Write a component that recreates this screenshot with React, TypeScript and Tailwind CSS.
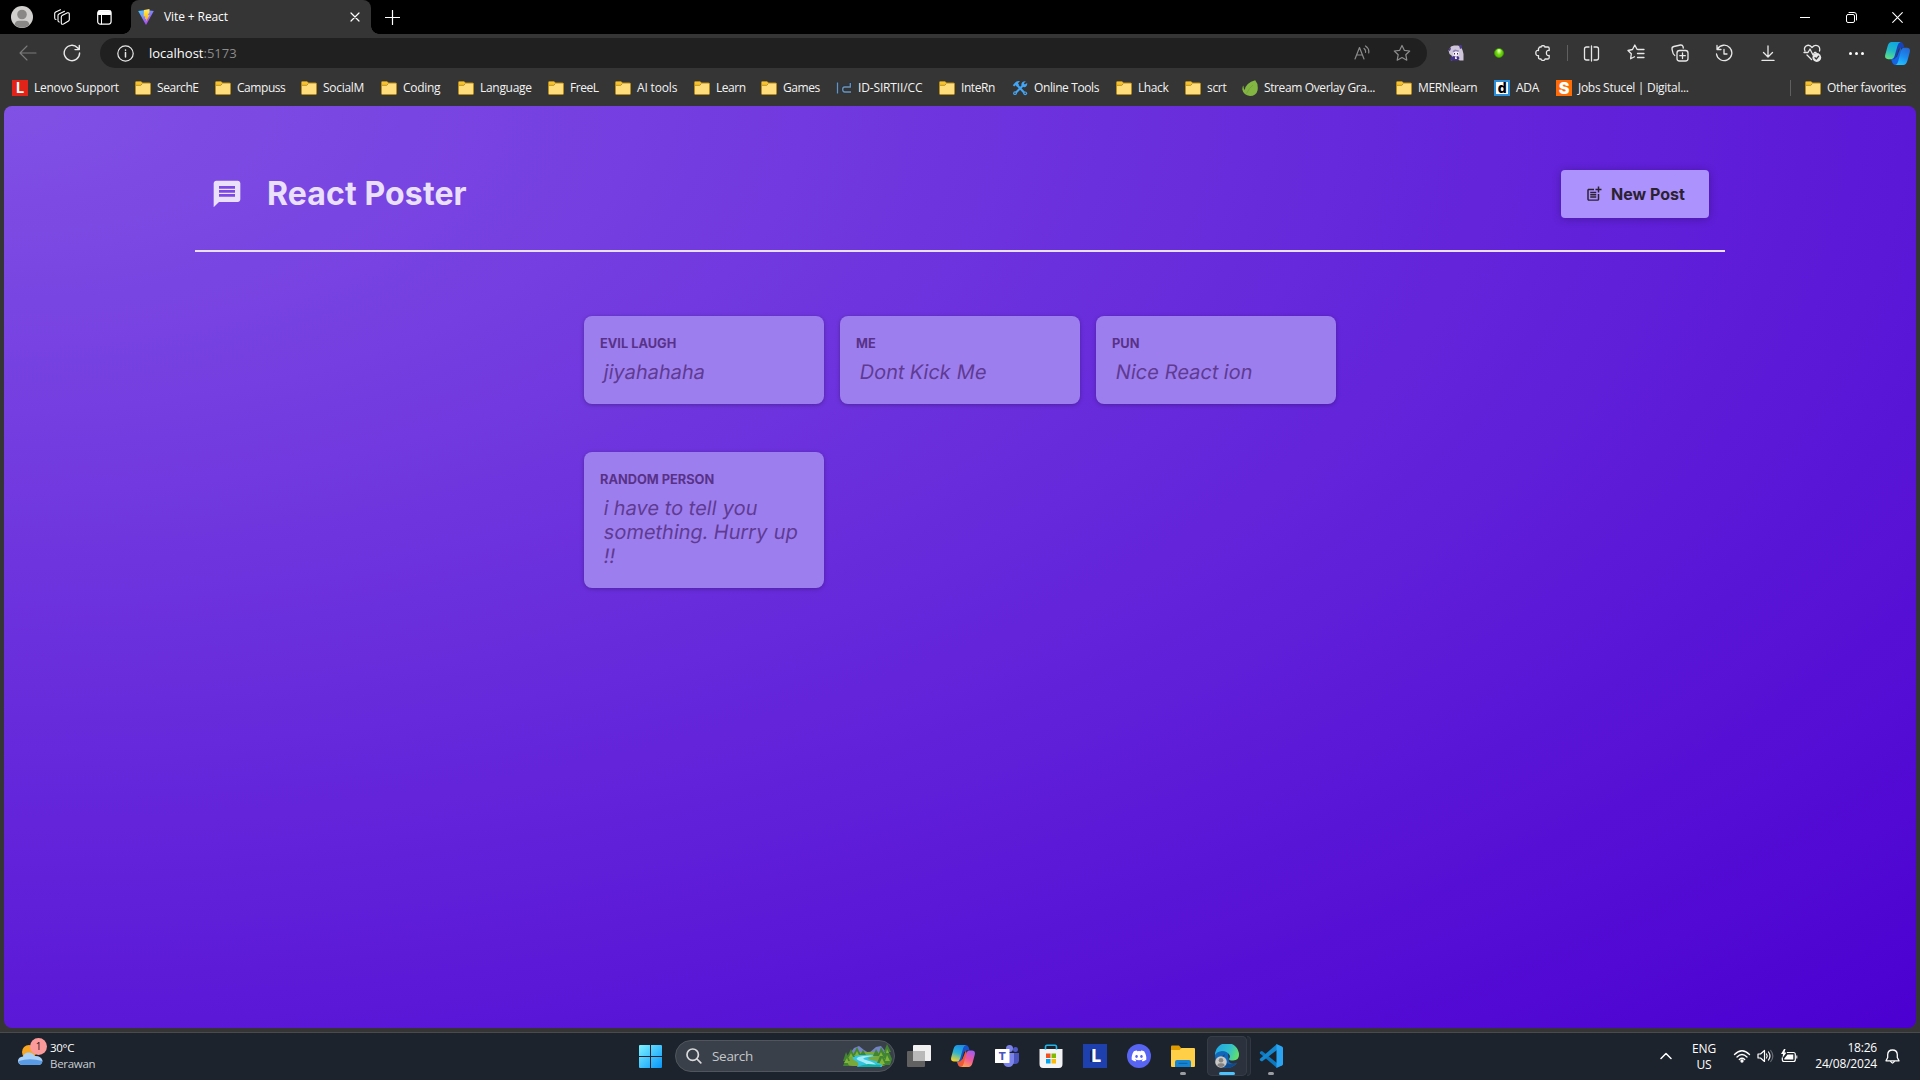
import React from "react";
import { MdMessage, MdPostAdd } from "react-icons/md";
import { FaDiscord } from "react-icons/fa";

type IconProps = { className?: string; children: React.ReactNode; size?: number; w?: number };

function Line({ className = "", children, size = 16, w = 1 }: IconProps) {
  return (
    <svg
      className={`shrink-0 ${className}`}
      width={size}
      height={size}
      viewBox={`0 0 ${size} ${size}`}
      fill="none"
      stroke="currentColor"
      strokeWidth={w}
      strokeLinecap="round"
      strokeLinejoin="round"
    >
      {children}
    </svg>
  );
}

function Folder() {
  return (
    <svg width="16" height="16" viewBox="0 0 16 16" className="shrink-0">
      <path d="M.5 2.5Q.5 1.5 1.5 1.5H6L7.5 3H14.5Q15.5 3 15.5 4V13.5Q15.5 14.5 14.5 14.5H1.5Q.5 14.5 .5 13.5Z" fill="#ffdc7c" stroke="#b88a16" />
      <path d="M1 5V2.5Q1 2 1.5 2H5.8L7.2 3.4L5.7 5Z" fill="#f6c22e" />
      <path d="M1 5.3H5.8L7.4 3.5" fill="none" stroke="#b88a16" strokeWidth=".9" />
    </svg>
  );
}

function SirtiiMark() {
  return (
    <svg width="16" height="16" viewBox="0 0 16 16" className="shrink-0" fill="none">
      <path d="M1.5 2V14M14.6 2V6.7H8.5Q6.5 6.7 6.5 9Q6.5 12 8.5 12H15" stroke="#20354a" strokeWidth="3" />
      <path d="M1.5 2.5V13.5M14.3 3V7H8.5Q6.7 7 6.7 9.3Q6.7 12 8.7 12H15" stroke="#7391ad" strokeWidth="1.3" />
    </svg>
  );
}

function ToolsMark() {
  return (
    <svg width="16" height="16" viewBox="0 0 16 16" className="shrink-0" fill="none">
      <path d="M5.5 5.5L13 13.5M10.5 6L3 13.5" stroke="#42a5f5" strokeWidth="2.1" strokeLinecap="round" />
      <path d="M.8 5.3L3.2 2.5Q5 .5 8 1L6 3.2L7 4.8L5 6.8L3.6 5.2L2.2 6.6Z" fill="#42a5f5" />
      <path d="M13.8 1.2L11.8 3.2L12.8 4.6L15.2 3Q15.5 6.5 12.5 7.2L9.8 6.4L9.3 4.2Q10 .8 13.8 1.2Z" fill="#42a5f5" />
      <circle cx="3" cy="13.2" r="1.9" fill="#42a5f5" />
      <circle cx="13.2" cy="13.3" r="1.9" fill="#42a5f5" />
      <circle cx="3" cy="13.2" r=".7" fill="#353535" />
      <circle cx="13.2" cy="13.3" r=".7" fill="#353535" />
    </svg>
  );
}

function LeafMark() {
  return (
    <svg width="16" height="16" viewBox="0 0 16 16" className="shrink-0">
      <path d="M13.2 .3Q16.5 4 15.6 10.2Q14.2 16 8 16Q1.500 15.500 .3 9.600Q.300 6 1.500 5.500Q1.600 9.500 2.800 9.800Q3.800 3 13.200 .300Z" fill="#82b541" />
      <path d="M4.500 13.500Q7 8 11 5" stroke="#6f9f35" fill="none" strokeWidth=".7" />
    </svg>
  );
}

function LetterTile({ kind }: { kind: "lenovo" | "ada" | "jobs" }) {
  if (kind === "lenovo") {
    return (
      <span className="flex size-4 shrink-0 items-center justify-center bg-[#e2231a] font-['Inter'] text-[14.5px] leading-none font-bold text-white">
        L
      </span>
    );
  }
  if (kind === "ada") {
    return (
      <span className="flex size-4 shrink-0 items-center justify-center border-2 border-[#2b8fd9] bg-white font-['Inter'] text-[14px] leading-none font-extrabold text-black">
        d
      </span>
    );
  }
  return (
    <span className="flex size-4 shrink-0 items-center justify-center bg-[#ff6c05] font-['Inter'] text-[16px] leading-none font-black text-white">
      S
    </span>
  );
}

const bookmarks: { label: string; width: string; icon?: React.ReactNode; tracking?: string }[] = [
  { label: "Lenovo Support", width: "w-[123px]", icon: <LetterTile kind="lenovo" /> },
  { label: "SearchE", width: "w-[80px]", tracking: "tracking-[-0.45px]" },
  { label: "Campuss", width: "w-[86px]", tracking: "tracking-[-0.45px]" },
  { label: "SocialM", width: "w-[80px]" },
  { label: "Coding", width: "w-[77px]" },
  { label: "Language", width: "w-[90px]" },
  { label: "FreeL", width: "w-[67px]", tracking: "tracking-[-0.45px]" },
  { label: "AI tools", width: "w-[79px]", tracking: "tracking-[-0.15px]" },
  { label: "Learn", width: "w-[67px]", tracking: "tracking-[-0.45px]" },
  { label: "Games", width: "w-[75px]", tracking: "tracking-[-0.45px]" },
  { label: "ID-SIRTII/CC", width: "w-[103px]", icon: <SirtiiMark />, tracking: "tracking-[-0.15px]" },
  { label: "InteRn", width: "w-[73px]", tracking: "tracking-[-0.45px]" },
  { label: "Online Tools", width: "w-[104px]", icon: <ToolsMark />, tracking: "tracking-[-0.4px]" },
  { label: "Lhack", width: "w-[69px]", tracking: "tracking-[-0.4px]" },
  { label: "scrt", width: "w-[57px]" },
  { label: "Stream Overlay Gra...", width: "w-[154px]", icon: <LeafMark />, tracking: "tracking-[-0.38px]" },
  { label: "MERNlearn", width: "w-[98px]", tracking: "tracking-[-0.38px]" },
  { label: "ADA", width: "w-[62px]", icon: <LetterTile kind="ada" /> },
  { label: "Jobs Stucel | Digital...", width: "w-[180px]", icon: <LetterTile kind="jobs" /> },
];

function TabStrip() {
  return (
    <div className="flex h-[34px] items-stretch bg-black text-white">
      <div className="flex w-[131px] items-center pl-[11px]">
        <svg width="22" height="22" viewBox="0 0 22 22">
          <circle cx="11" cy="11" r="11" fill="#d2d0ce" />
          <circle cx="11" cy="8.500" r="4.800" fill="#8a8886" />
          <path d="M3.500 19Q4 14.700 8 14.700H14Q18 14.700 18.500 19Q11 24.500 3.500 19Z" fill="#8a8886" />
        </svg>
        <Line className="ml-[21px]" size={16} w={1.1}>
          <path d="M8.500 6.300L13.500 3.800Q15.300 3.500 15.300 5V10.500Q15.300 11.500 14.500 12L9.500 15Q7.300 15.800 7.300 14V8Q7.300 7 8.500 6.300Z" />
          <path d="M5.300 13Q4 13 4 11.500V6.500Q4 5.500 5 5L10.500 2.200M2 10.500Q.7 10.500 .7 9V4.500Q.7 3.500 1.700 3L6.500 .7" />
        </Line>
        <Line className="ml-[27px]" size={15} w={1.2}>
          <rect x=".7" y=".7" width="13.400" height="13.400" rx="2.500" />
          <path d="M1.500 1.200H13.500V4.300H1.500Z" fill="currentColor" />
          <path d="M4.500 5V14" strokeWidth="1" />
        </Line>
      </div>
      <div className="relative flex w-[240px] items-center rounded-t-[8px] bg-[#353535] pl-[7px]">
        <span className="absolute bottom-0 -left-2 size-2 bg-[radial-gradient(circle_at_0_0,#000_7.5px,#353535_8px)]" />
        <span className="absolute -right-2 bottom-0 size-2 bg-[radial-gradient(circle_at_100%_0,#000_7.5px,#353535_8px)]" />
        <svg width="16" height="16" viewBox="0 0 16 16">
          <defs>
            <linearGradient id="vite-a" x1="0" y1="0" x2=".7" y2="1">
              <stop offset="0" stopColor="#41d1ff" />
              <stop offset="1" stopColor="#bd34fe" />
            </linearGradient>
            <linearGradient id="vite-b" x1="0" y1="0" x2="0" y2="1">
              <stop offset="0" stopColor="#ffea83" />
              <stop offset=".3" stopColor="#ffdd35" />
              <stop offset="1" stopColor="#ffa800" />
            </linearGradient>
          </defs>
          <path d="M.2 2.100L8 1L15.800 2.100L8.300 15.600Q8 16 7.700 15.600Z" fill="url(#vite-a)" />
          <path d="M11.500 0L6 1L5.600 7.600L7.300 7.300L6.900 10L8.300 9.700L7.700 13L11.700 6L9.700 6.300L11.400 3.300Z" fill="url(#vite-b)" />
        </svg>
        <span className="ml-[10px] grow text-[12px] tracking-[-0.1px]">Vite + React</span>
        <Line className="mr-[11px]" size={10} w={1.2}>
          <path d="M1 1L9 9M9 1L1 9" />
        </Line>
      </div>
      <div className="flex grow items-center pl-[14px]">
        <Line size={15} w={1.2}>
          <path d="M7.500 .5V14.500M.5 7.500H14.500" />
        </Line>
      </div>
      <div className="flex w-[138px] items-center">
        <span className="flex w-[46px] justify-center">
          <span className="h-px w-[10px] bg-white" />
        </span>
        <span className="flex w-[46px] justify-center">
          <Line size={11}>
            <rect x=".5" y="2.500" width="8" height="8" rx="1.500" />
            <path d="M3 .5H8Q10.500 .5 10.500 3V8" />
          </Line>
        </span>
        <span className="flex w-[46px] justify-center">
          <Line size={11} w={1.1}>
            <path d="M.7 .7L10.300 10.300M10.300 .7L.7 10.300" />
          </Line>
        </span>
      </div>
    </div>
  );
}

function Slot({ children, className = "w-[44px]" }: { children: React.ReactNode; className?: string }) {
  return <span className={`flex shrink-0 items-center justify-center ${className}`}>{children}</span>;
}

function CopilotMark({ size, warm }: { size: number; warm?: boolean }) {
  const id = warm ? "cw" : "cb";
  return (
    <svg width={size} height={size} viewBox="0 0 24 24">
      <defs>
        <linearGradient id={`${id}1`} x1=".6" y1="0" x2=".3" y2="1">
          <stop offset="0" stopColor={warm ? "#1a8fe8" : "#0fa5e0"} />
          <stop offset=".5" stopColor={warm ? "#2fb3d0" : "#21b8c8"} />
          <stop offset="1" stopColor={warm ? "#f3d32b" : "#5fe084"} />
        </linearGradient>
        <linearGradient id={`${id}2`} x1=".7" y1="0" x2=".3" y2="1">
          <stop offset="0" stopColor={warm ? "#a05cf0" : "#2668d8"} />
          <stop offset=".5" stopColor={warm ? "#f0589b" : "#1b8df0"} />
          <stop offset="1" stopColor={warm ? "#ffa04f" : "#22c3ff"} />
        </linearGradient>
      </defs>
      <path d="M6 1H15Q17 1 17.800 3.500L18.600 6.500H15.500L13 8L9 22H8.500Q7 22 6.300 19.500L5 16Z" fill={warm ? "#1652c8" : "#1742b8"} />
      <path d="M18 23H10Q7.500 23 6.700 19.500L6 17.500H9L11.500 15L15 6Z" fill={warm ? "#ef5a36" : "#1665e0"} />
      <path d="M6.500 1H15Q12.800 1.500 12 4.500L9.200 14.500Q8.400 17.400 6 17.400H3Q-.8 17.400 .3 13L2.500 5Q3.600 1 6.500 1Z" fill={`url(#${id}1)`} />
      <path d="M17.500 23H10Q12 22.500 12.700 19.500L15.300 9.500Q16.100 6.500 18.500 6.500H21Q24.800 6.500 23.700 11L21.500 19Q20.400 23 17.500 23Z" fill={`url(#${id}2)`} />
    </svg>
  );
}

function Toolbar() {
  return (
    <div className="flex h-[38px] items-center text-[#e8e8e8]">
      <div className="flex w-[100px] items-center pl-[19px]">
        <Line className="text-[#7c7c7c]" size={18} w={1.1}>
          <path d="M1 9H17M8 2L1 9L8 16" />
        </Line>
        <Line className="ml-[26px]" size={18} w={1.4}>
          <path d="M16.600 9A7.700 7.700 0 1 1 14.500 3.700L16 5.300M16.300 1.500V5.600H12" />
        </Line>
      </div>
      <div className="flex h-[30px] w-[1327px] items-center rounded-full bg-[#202020] pr-[5px] pl-[17px]">
        <Line size={17} w={1.2}>
          <circle cx="8.500" cy="8.500" r="7.700" />
          <path d="M8.500 7.500V12M8.500 5V5.200" strokeWidth="1.5" />
        </Line>
        <span className="ml-[15px] grow pt-px text-[13px] text-white">
          localhost<span className="text-[#8b8b8b]">:5173</span>
        </span>
        <Slot className="w-[40px] text-[#8c8c8c]">
          <Line size={16} w={1.2}>
            <path d="M1 14L5.500 2.500L10 14M2.600 10H8.400M10 3.500Q12 5 11.500 7.500M11.500 1Q15.500 3.500 14.700 8" />
          </Line>
        </Slot>
        <Slot className="w-[40px] text-[#8c8c8c]">
          <Line size={18} w={1.2}>
            <path d="M9 1.500L11.300 6.300L16.700 7L12.800 10.700L13.800 16.200L9 13.500L4.200 16.200L5.200 10.700L1.300 7L6.700 6.300Z" />
          </Line>
        </Slot>
      </div>
      <div className="flex items-center pl-[7px]">
        <Slot>
          <svg width="16" height="16" viewBox="0 0 16 16">
            <path d="M3 1.500L6 .5H10L13 2L14.500 5L15.500 9V15.500H12L8 14L3 15.500L4 11L1.500 9L.5 5.500Z" fill="#cfc6da" />
            <path d="M11 0H13.500L14 3L12 4ZM1 4L3 2.500L2.500 5L.8 6.500Z" fill="#4c3a92" />
            <path d="M5 7L7 6L9 7L11 6.500L10.500 10.500L8 11.500L5.500 10.500Z" fill="#f6eef2" />
            <path d="M4.500 6L7 4.500L11 5.500L10.500 7L8 6L5.500 7.500Z" fill="#8f80b5" />
            <path d="M6 8H7V9.500H6ZM9 8H10V9.500H9Z" fill="#3a2c6e" />
            <path d="M3 12L6 11L8 12L10 11L11.500 13L10 15.500H2Z" fill="#46318a" />
            <path d="M7 12H8.500L9 14H7Z" fill="#f2edf6" />
          </svg>
        </Slot>
        <Slot className="w-[42px]">
          <span className="size-[10px] rounded-full border border-[#3e9708] bg-[radial-gradient(ellipse_at_50%_20%,#d5ffa0_10%,#6dd40a_50%,#52b000)]" />
        </Slot>
        <Slot className="w-[45px]">
          <Line size={16} w={1.3}>
            <path d="M4 3Q4 2 5 2H6.200Q6 .7 8 .6Q10 .7 9.800 2H13Q14.200 2 14.200 3.500V5.500Q11.400 5 11.400 8Q11.400 11 14.200 10.500V12.500Q14.200 14 13 14H10Q9.800 15.500 8 15.500Q6.200 15.500 6 14H5Q3.500 14 3.500 12.500V10.600Q.8 11 .8 8Q.8 5 3.500 5.500V3.500Z" />
          </Line>
        </Slot>
        <span className="mx-[2px] h-4 w-px bg-[#606060]" />
        <Slot className="w-[43px]">
          <Line size={17} w={1.3}>
            <path d="M6 2H3.500Q1.500 2 1.500 4V13Q1.500 15 3.500 15H6M11 2H13.500Q15.500 2 15.500 4V13Q15.500 15 13.500 15H11M8.500 1V16" />
          </Line>
        </Slot>
        <Slot className="ml-px w-[44px]">
          <Line size={18} w={1.3}>
            <path d="M11.500 5.500L10 5.300L7.800 1L5.500 5.500L1 6.500L4.300 9.800L3.600 14.800L7.500 12.700M11.500 5.500H17M10.500 9.500H17M10.500 13.500H17" />
          </Line>
        </Slot>
        <Slot>
          <Line size={18} w={1.3}>
            <rect x="6" y="6.500" width="11" height="10.500" rx="2.500" />
            <path d="M11.500 9V14.500M8.800 11.700H14.300M3.800 11.500Q2 10.500 1.700 8L1 5Q.8 3 2.800 2.500L9.500 1Q11.500 .8 12 2.500L12.300 4" />
          </Line>
        </Slot>
        <Slot>
          <Line size={18} w={1.3}>
            <path d="M2.500 5A7.700 7.700 0 1 1 1.500 10M2 1.500V5.500H6M9 5.500V10H12" />
          </Line>
        </Slot>
        <Slot>
          <Line size={16} w={1.3}>
            <path d="M8 1V11.500M3.500 7.500L8 12L12.500 7.500M2 15.500H14" />
          </Line>
        </Slot>
        <Slot className="w-[45px]">
          <Line size={19} w={1.3}>
            <path d="M2 7Q.5 4 3 2Q6.500 0 9 3.500Q12 0 15.500 2.300Q17.300 4 16.500 7M1 8.500H5L7 5L10 11L11.500 8.500H13M4 11L8.500 15.500" />
            <circle cx="13.800" cy="13.500" r="4.400" fill="currentColor" stroke="none" />
            <path d="M12 13.700L13.300 15L15.700 12.200" stroke="#353535" />
          </Line>
        </Slot>
        <Slot className="w-[42px]">
          <span className="flex gap-[3px]">
            <i className="size-[3px] rounded-full bg-white" />
            <i className="size-[3px] rounded-full bg-white" />
            <i className="size-[3px] rounded-full bg-white" />
          </span>
        </Slot>
        <Slot className="w-[41px]">
          <CopilotMark size={25} />
        </Slot>
      </div>
    </div>
  );
}

function BookmarksBar() {
  return (
    <div className="flex h-[34px] items-center pb-[2px] pl-[12px] text-[12px] text-[#f3f3f3]">
      {bookmarks.map((b) => (
        <div
          key={b.label}
          className={`flex shrink-0 items-center gap-[6px] whitespace-nowrap ${b.width} ${b.tracking ?? "tracking-[-0.3px]"}`}
        >
          {b.icon ?? <Folder />}
          <span>{b.label}</span>
        </div>
      ))}
      <div className="ml-[54px] flex items-center tracking-[-0.36px] whitespace-nowrap">
        <span className="h-4 w-px bg-[#606060]" />
        <span className="ml-[14px] flex">
          <Folder />
        </span>
        <span className="ml-[6px]">Other favorites</span>
      </div>
    </div>
  );
}

const posts = [
  { author: "Evil Laugh", body: "jiyahahaha" },
  { author: "Me", body: "Dont Kick Me" },
  { author: "Pun", body: "Nice React ion" },
  { author: "Random Person", body: "i have to tell you something. Hurry up !!" },
];

/* Oblique text that keeps the upright letterforms: every word is slanted around its baseline. */
function Oblique({ text }: { text: string }) {
  return (
    <>
      {text.split(" ").map((word, i) => (
        <React.Fragment key={i}>
          {i > 0 && " "}
          <span className="inline-block origin-[0_75%] -skew-x-[9.4deg]">{word}</span>
        </React.Fragment>
      ))}
    </>
  );
}

function Page() {
  return (
    <main className="mx-1 h-[922px] overflow-hidden rounded-[8px] bg-[radial-gradient(ellipse_at_top_left,#8151e5,#4b00d1)] font-['Inter',sans-serif] [font-optical-sizing:none]">
      <header className="mx-auto mt-[32px] flex h-[114px] w-[1530px] items-center justify-between border-b-2 border-[#ebe0fb] px-4">
        <h1 className="flex items-center gap-6 text-[32px] font-bold tracking-[0.13px] text-[#ebe0fb]">
          <MdMessage size={32} />
          <span>React Poster</span>
        </h1>
        <button className="flex h-12 w-[148px] items-center gap-2 rounded-[4px] bg-[#ab92fd] pl-6 text-[16px] font-bold whitespace-nowrap text-[#2b2130] shadow-[0_1px_8px_rgba(0,0,0,0.25)]">
          <MdPostAdd size={18} />
          New Post
        </button>
      </header>
      <ul className="mx-auto mt-16 grid w-[752px] grid-cols-3 items-start gap-x-4 gap-y-12">
        {posts.map((p) => (
          <li key={p.author} className="rounded-[8px] bg-[#9d7eef] px-4 pt-5 pb-5 shadow-[0_1px_4px_rgba(0,0,0,0.28)]">
            <p className="text-[12.8px] leading-[15px] font-bold text-[#583288] uppercase">{p.author}</p>
            <p className="mt-[9px] ml-[3px] text-[20px] leading-[24px] text-[#5f3b92]">
              <Oblique text={p.body} />
            </p>
          </li>
        ))}
      </ul>
    </main>
  );
}

function TaskItem({ children, dot, active }: { children: React.ReactNode; dot?: boolean; active?: boolean }) {
  return (
    <div className="flex w-[44px] justify-center">
      <div
        className={`relative flex size-10 shrink-0 items-center justify-center rounded-[5px] ${
          active ? "bg-[#2b323d] shadow-[inset_0_0_0_1px_#363d47]" : ""
        }`}
      >
        {children}
        {dot && <span className="absolute bottom-[1px] h-[3px] w-[6px] rounded-full bg-[#9a9da1]" />}
        {active && <span className="absolute bottom-[1px] h-[3px] w-4 rounded-full bg-[#4cc2ff]" />}
        {active && <span className="absolute top-0 -right-1 h-10 w-1 rounded-r-[5px] border border-l-0 border-[#313843] bg-[#242b35]" />}
      </div>
    </div>
  );
}

function Taskbar() {
  return (
    <footer className="flex h-[48px] items-center border-t border-[#494a4b] bg-[#1c232c] pb-px text-white">
      <div className="flex w-[639px] items-center pl-[17px]">
        <div className="relative h-8 w-[33px]">
          <svg width="33" height="32" viewBox="0 0 33 32">
            <circle cx="12" cy="12" r="7" fill="#f6a623" />
            <path d="M5 25Q1 24.500 1 20.500Q1.500 17 6 16.500Q7.500 12 12.500 12.500Q16.500 13 17.500 16Q24 15.500 25.500 20.500Q25 25 21 25Z" fill="#a9d0f7" />
            <path d="M5 25Q1 24 2 21Q12 17.500 25.500 21Q25 25 21 25Z" fill="#5a9be5" />
          </svg>
          <span className="absolute -top-[2px] left-[13px] flex size-[17px] items-center justify-center rounded-full bg-[#fb9a9a] text-[10px] text-[#301010]">1</span>
        </div>
        <div className="text-[11.5px] leading-[16px] tracking-[-0.3px]">
          <p>30°C</p>
          <p className="text-[#c9cdd2]">Berawan</p>
        </div>
      </div>
      <svg width="23" height="23" viewBox="0 0 23 23" className="mr-[13px] shrink-0">
        <defs>
          <linearGradient id="win" x1="0" y1="0" x2="1" y2="1">
            <stop offset="0" stopColor="#7df3ff" />
            <stop offset="1" stopColor="#0795f8" />
          </linearGradient>
        </defs>
        <path d="M0 1Q0 0 1 0H11V11H0ZM12 0H22Q23 0 23 1V11H12ZM0 12H11V23H1Q0 23 0 22ZM12 12H23V22Q23 23 22 23H12Z" fill="url(#win)" />
      </svg>
      <div className="flex h-8 w-[220px] items-center rounded-full border border-[#51565e] bg-[#3a4049] pl-[10px]">
        <Line size={16} w={1.7} className="text-[#d9dadc]">
          <circle cx="6.700" cy="6.700" r="5.700" />
          <path d="M11 11L14.800 14.800" />
        </Line>
        <span className="ml-[10px] grow text-[13.5px] tracking-[-0.3px] text-[#c4c7ca]">Search</span>
        <svg width="50" height="24" viewBox="0 0 50 24" className="mr-[1px]">
          <path d="M6 11L11 4L16 2L21 6L26 9L33 3L38 2L43 8L47 16H4Z" fill="#7383c4" />
          <path d="M3 13Q12 7 24 8Q36 7 47 11L48 18Q42 23 34 22H10Q2 22 2 18Z" fill="#79a83b" />
          <path d="M18 11Q31 10 35 12Q20 13 28 16Q40 18 39 23H14Q18 19 11 16Q6 12 18 11Z" fill="#35c4e0" />
          <path d="M20 12Q29 11 31 12Q15 14 23 16Q34 19 33 22H23Q26 20 17 17Q9 14 20 12Z" fill="#a4ecf5" />
          <path d="M14 23Q19 21 25 20L38 21L37 23Z" fill="#0fb1a6" />
          <path d="M3 8L7 17H4L6 22H0L2 17H0ZM8 5L12 13H4ZM14 3L18 11H10ZM20 6L23 11H17ZM33 5L37 12H30ZM38 3L43 12H40L44 19H34L37 12H35ZM44 0L48 8H46L49 15L47 21H40L42 14H40L42 8H41Z" fill="#418432" />
          <path d="M8 9L10 13H6ZM14 7L16 11H12ZM38 8L40 12H36ZM44 5L46 9H43ZM44 11L47 17H42ZM39 14L42 20H36ZM4 14L6 19H1Z" fill="#80b43a" />
        </svg>
      </div>
      <div className="flex items-center pl-[2px]">
        <TaskItem>
          <svg width="24" height="22" viewBox="0 0 24 22">
            <rect x="6" width="18" height="16" rx="1" fill="#f0f0f0" />
            <rect y="6" width="18" height="16" rx="1" fill="#616161" />
            <path d="M6 6H18V16H6Z" fill="#b9b9b9" />
          </svg>
        </TaskItem>
        <TaskItem>
          <CopilotMark size={24} warm />
        </TaskItem>
        <TaskItem>
          <svg width="24" height="24" viewBox="0 0 24 24">
            <circle cx="20.500" cy="5.500" r="2.500" fill="#5059c9" />
            <path d="M17 9H24V17Q23.500 20 20 20H16Z" fill="#4b53bc" />
            <circle cx="14.500" cy="4.500" r="3.500" fill="#7b83eb" />
            <path d="M9 9H19V18Q18 23 13.500 23Q9 23 8 18Z" fill="#7b83eb" />
            <rect x="0" y="5" width="14.500" height="14" rx=".5" fill="#fff" />
            <text x="7.250" y="16" textAnchor="middle" className="fill-[#4b53bc] font-['Inter'] text-[11px] font-extrabold">T</text>
          </svg>
        </TaskItem>
        <TaskItem>
          <svg width="24" height="24" viewBox="0 0 24 24">
            <path d="M.5 5H23.500V20Q23.500 24 20 24H4Q.5 24 .5 20Z" fill="#f1f3f5" />
            <path d="M7 9.500H11.500V14H7Z" fill="#f25022" />
            <path d="M12.500 9.500H17V14H12.500Z" fill="#7fba00" />
            <path d="M7 15H11.500V19.500H7Z" fill="#00a4ef" />
            <path d="M12.500 15H17V19.500H12.500Z" fill="#ffb900" />
            <path d="M6.500 5.500V3Q6.500 1.200 8 1.200H16Q17.500 1.200 17.500 3V5.500" fill="none" stroke="#20b4e8" strokeWidth="1.600" />
          </svg>
        </TaskItem>
        <TaskItem>
          <svg width="24" height="24" viewBox="0 0 24 24">
            <rect width="24" height="24" fill="#1e40af" />
            <path d="M7 7L9 5V17H17V18H7Z" fill="#16255d" />
            <text x="13.300" y="17.500" textAnchor="middle" className="fill-white font-['Inter'] text-[17px] font-extrabold">L</text>
          </svg>
        </TaskItem>
        <TaskItem>
          <span className="flex size-6 items-center justify-center rounded-full bg-[#5865f2] text-white">
            <FaDiscord size={16} />
          </span>
        </TaskItem>
        <TaskItem dot>
          <svg width="24" height="22" viewBox="0 0 24 22">
            <path d="M0 1.500Q0 .5 1 .5H8L10.500 3.500V8H0Z" fill="#e19c00" />
            <path d="M0 5H8.500L10.500 3H23Q24 3 24 4V21Q24 22 23 22H1Q0 22 0 21Z" fill="#ffcf48" />
            <path d="M4 22V17Q4 15 6 15H18Q20 15 20 17V22Z" fill="#1585d3" />
            <path d="M7.500 18.300H16.500" stroke="#0b5fa5" />
          </svg>
        </TaskItem>
        <TaskItem active>
          <svg width="24" height="24" viewBox="0 0 24 24">
            <defs>
              <linearGradient id="edge-a" x1="0" y1=".3" x2="1" y2=".6">
                <stop offset="0" stopColor="#1ea7e8" />
                <stop offset=".6" stopColor="#35c1c8" />
                <stop offset="1" stopColor="#64e265" />
              </linearGradient>
            </defs>
            <path d="M12 0A12 12 0 0 0 0 12Q1 24 12 24Q18 24 22 19Q17 21 14 18Z" fill="#1267b8" />
            <path d="M10 10Q7 16 12 19Q17 22 22 18Q18 24 12 24Q4 22 6 13Z" fill="#114a8b" />
            <path d="M0 11A12 12 0 0 1 24 11Q24 16 18 16.500Q14 16.500 14 15Q15.500 13 14.500 11Q12 7 7 7Q2 7.500 0 11Z" fill="url(#edge-a)" />
            <circle cx="6" cy="18" r="5.800" fill="#c9c8c6" />
            <circle cx="6" cy="16.300" r="2.300" fill="#858381" />
            <path d="M2.300 21.500Q2.500 19.300 5 19.300H7Q9.500 19.300 9.700 21.500Q6 24.500 2.300 21.500Z" fill="#858381" />
          </svg>
        </TaskItem>
        <TaskItem dot>
          <svg width="24" height="24" viewBox="0 0 24 24">
            <path d="M1.500 7.500L3 7L18 19V24L1 9.500Q.3 8.500 1.500 7.500Z" fill="#0b78c0" />
            <path d="M18 0V6L3 17.500L1.500 16.800Q.3 15.800 1 14.800Z" fill="#1587cf" />
            <path d="M17.500 0L23 2.500Q24 3 24 4V20Q24 21 23 21.500L17.500 24Z" fill="#2aa4f2" />
          </svg>
        </TaskItem>
      </div>
      <div className="ml-auto flex items-center pr-[20px] text-[12px] leading-[16px] tracking-[-0.2px]">
        <Line size={12} w={1.5}>
          <path d="M1 8.500L6 3.500L11 8.500" />
        </Line>
        <div className="ml-[17px] w-[30px] pt-px text-center">
          <p>ENG</p>
          <p>US</p>
        </div>
        <svg width="18" height="16" viewBox="0 0 18 16" className="ml-[14px]" fill="none" stroke="#fff" strokeWidth="1.300" strokeLinecap="round">
          <path d="M1.500 6.500Q9 -1 16.500 6.500M4 9Q9 4 14 9M6.300 11.500Q9 9 11.700 11.500" />
          <circle cx="9" cy="13" r="1" fill="#fff" />
        </svg>
        <svg width="17" height="16" viewBox="0 0 17 16" className="ml-[6px]" fill="none" stroke="#fff" strokeWidth="1.200" strokeLinecap="round" strokeLinejoin="round">
          <path d="M1 6H3.500L7.500 2.500V13.500L3.500 10H1ZM9.500 6Q11 8 9.500 10M11.500 4Q14.500 8 11.500 12" />
          <path d="M13.700 2.500Q18 8 13.700 13.500" stroke="#666c74" />
        </svg>
        <svg width="17" height="15" viewBox="0 0 17 15" className="ml-[7px]" fill="none" stroke="#fff" strokeWidth="1.200">
          <path d="M6 3.500H12.500Q14.300 3.500 14.300 5.500V10.500Q14.300 12.500 12.500 12.500H3Q1.300 12.500 1.300 10.500V8.500" />
          <path d="M6.500 5.500H12.300V10.500H3.300V9.500ZM15.300 6.500H16.300V9.500H15.300Z" fill="#fff" stroke="none" />
          <path d="M3 0L0 5H2L1.500 9L5.500 3.500H3.500L4.500 0Z" fill="#fff" stroke="none" />
        </svg>
        <div className="w-[79px] text-right">
          <p>18:26</p>
          <p>24/08/2024</p>
        </div>
        <Line size={15} w={1.3} className="ml-[8px]">
          <path d="M7.500 1Q12 1 12.300 5.500V8.500L14 11.800H1L2.700 8.500V5.500Q3 1 7.500 1ZM5.700 12.500Q7.500 15.500 9.300 12.500" />
        </Line>
      </div>
    </footer>
  );
}

export default function App() {
  return (
    <div className="flex h-[1080px] w-[1920px] flex-col overflow-hidden bg-[#353535] font-['Open_Sans','Noto_Sans',sans-serif]">
      <TabStrip />
      <Toolbar />
      <BookmarksBar />
      <Page />
      <div className="h-1 bg-[#353535]" />
      <Taskbar />
    </div>
  );
}
